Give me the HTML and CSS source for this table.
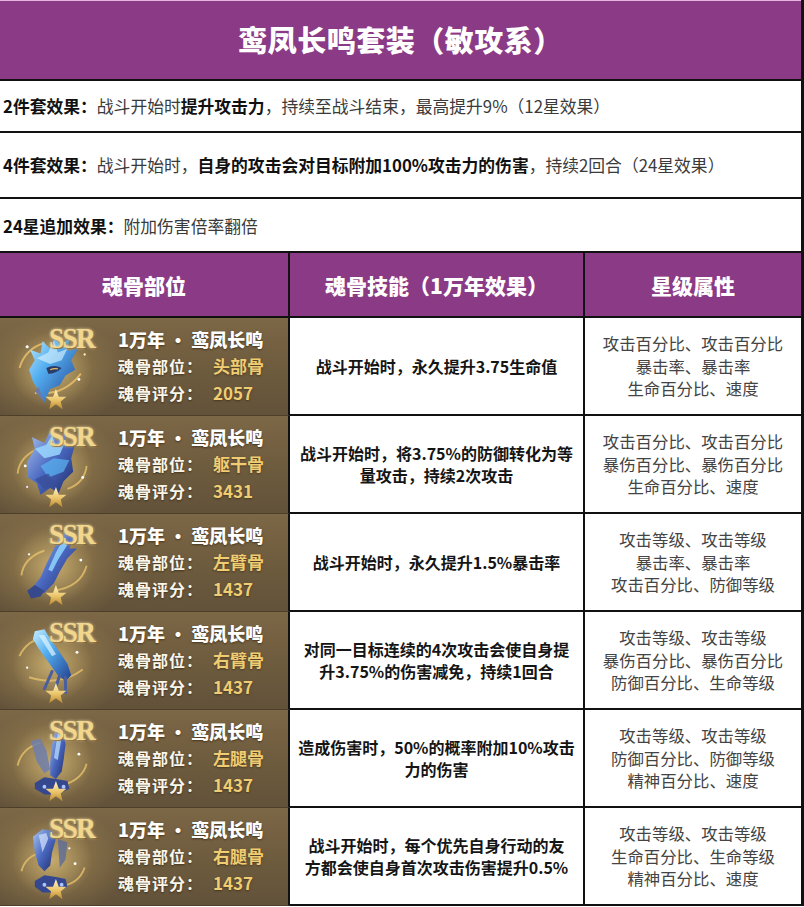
FILE: index.html
```html
<!DOCTYPE html>
<html lang="zh">
<head>
<meta charset="utf-8">
<title>鸾凤长鸣套装（敏攻系）</title>
<link rel="stylesheet" href="styles.css">
</head>
<body>
<svg class="defs" aria-hidden="true">
  <defs>
    <linearGradient id="gBlue" x1="0" y1="0" x2="1" y2="1">
      <stop offset="0" stop-color="#c8eeff"/>
      <stop offset="0.4" stop-color="#53aef0"/>
      <stop offset="1" stop-color="#223e8e"/>
    </linearGradient>
    <linearGradient id="gDeep" x1="0" y1="0" x2="1" y2="1">
      <stop offset="0" stop-color="#a9c6f0"/>
      <stop offset="0.5" stop-color="#4a68c0"/>
      <stop offset="1" stop-color="#1d2a66"/>
    </linearGradient>
    <linearGradient id="gGold" x1="0" y1="0" x2="0" y2="1">
      <stop offset="0" stop-color="#fff4c6"/>
      <stop offset="0.55" stop-color="#ebc469"/>
      <stop offset="1" stop-color="#b98a34"/>
    </linearGradient>
    <radialGradient id="gGlow" cx="0.5" cy="0.5" r="0.5">
      <stop offset="0" stop-color="#f5d78a" stop-opacity="0.5"/>
      <stop offset="1" stop-color="#f5d78a" stop-opacity="0"/>
    </radialGradient>
    <path id="star" d="M52 72 L55 80 L63 80 L57 85 L59 93 L52 88 L45 93 L47 85 L41 80 L49 80Z"/>
  </defs>
</svg>
<div class="page">
  <header class="title">鸾凤长鸣套装（敏攻系）</header>
  <div class="effect e1"><b>2件套效果：</b>战斗开始时<b>提升攻击力</b>，持续至战斗结束，最高提升9%（12星效果）</div>
  <div class="effect e2"><b>4件套效果：</b>战斗开始时，<b>自身的攻击会对目标附加100%攻击力的伤害</b>，持续2回合（24星效果）</div>
  <div class="effect e3"><b>24星追加效果：</b>附加伤害倍率翻倍</div>

  <div class="table">
    <div class="th">魂骨部位</div>
    <div class="th">魂骨技能（1万年效果）</div>
    <div class="th th-last">星级属性</div>

    <!-- row 1 -->
    <div class="bone">
      <div class="art">
        <svg viewBox="0 0 100 96" class="item">
          <ellipse cx="48" cy="52" rx="42" ry="40" fill="url(#gGlow)"/>
          <path d="M14 50 Q20 30 40 24" fill="none" stroke="#e6c06a" stroke-width="2" opacity="0.85"/>
          <path d="M30 76 Q60 80 78 56" fill="none" stroke="#e6c06a" stroke-width="2" opacity="0.85"/>
          <path d="M24 52 L30 42 L25 31 L36 35 L38 22 L46 30 L52 15 L56 28 L66 19 L64 32 L75 30 L68 42 L72 52 L62 58 L56 68 L46 72 L40 86 L34 74 L28 64 Z" fill="url(#gBlue)"/>
          <path d="M32 40 L44 34 L50 22 L54 34 L64 30 L58 42 L46 46 Z" fill="#e1f6ff" opacity="0.6"/>
          <path d="M42 50 Q50 46 58 50 Q52 56 44 56Z" fill="#2b3c68"/>
          <path d="M46 52 Q50 50 54 51" stroke="#e6c06a" stroke-width="1.2" fill="none"/>
          <path d="M34 70 L40 86 L30 74Z" fill="#6c7aa4"/>
          <circle cx="22" cy="28" r="1.6" fill="#fff"/>
          <circle cx="76" cy="62" r="1.5" fill="#fff"/>
          <circle cx="82" cy="36" r="1.2" fill="#fff3c0"/>
          <use href="#star" fill="url(#gGold)"/>
        </svg>
        <span class="ssr">SSR</span>
      </div>
      <div class="info">
        <div class="name">1万年 · 鸾凤长鸣</div>
        <div class="kv"><span class="k">魂骨部位：</span><span class="v">头部骨</span></div>
        <div class="kv"><span class="k">魂骨评分：</span><span class="v">2057</span></div>
      </div>
    </div>
    <div class="skill">战斗开始时，永久提升3.75生命值</div>
    <div class="attr">攻击百分比、攻击百分比<br>暴击率、暴击率<br>生命百分比、速度</div>

    <!-- row 2 -->
    <div class="bone">
      <div class="art">
        <svg viewBox="0 0 100 96" class="item">
          <ellipse cx="48" cy="52" rx="42" ry="40" fill="url(#gGlow)"/>
          <path d="M12 58 Q14 40 34 32" fill="none" stroke="#e6c06a" stroke-width="2" opacity="0.8"/>
          <path d="M64 74 Q82 68 84 50" fill="none" stroke="#e6c06a" stroke-width="2" opacity="0.8"/>
          <path d="M22 46 L30 32 L27 20 L40 26 L46 13 L52 24 L62 17 L62 30 L72 27 L68 42 L70 56 L60 66 L55 78 L46 73 L36 80 L32 68 L23 62 Z" fill="url(#gDeep)"/>
          <path d="M30 32 L42 28 L48 18 L52 30 L62 24 L56 38 L40 42 Z" fill="#9ad7ff" opacity="0.85"/>
          <path d="M36 50 L50 42 L66 44 L60 56 L44 62 Z" fill="#5bb6f4" opacity="0.7"/>
          <path d="M30 64 L44 58 L52 70 L40 74Z" fill="#3a4f9a" opacity="0.8"/>
          <circle cx="20" cy="50" r="1.5" fill="#fff"/>
          <circle cx="80" cy="62" r="1.5" fill="#fff"/>
          <circle cx="22" cy="72" r="1.2" fill="#f3d9ff"/>
          <use href="#star" fill="url(#gGold)"/>
        </svg>
        <span class="ssr">SSR</span>
      </div>
      <div class="info">
        <div class="name">1万年 · 鸾凤长鸣</div>
        <div class="kv"><span class="k">魂骨部位：</span><span class="v">躯干骨</span></div>
        <div class="kv"><span class="k">魂骨评分：</span><span class="v">3431</span></div>
      </div>
    </div>
    <div class="skill">战斗开始时，将3.75%的防御转化为等<br>量攻击，持续2次攻击</div>
    <div class="attr">攻击百分比、攻击百分比<br>暴伤百分比、暴伤百分比<br>生命百分比、速度</div>

    <!-- row 3 -->
    <div class="bone">
      <div class="art">
        <svg viewBox="0 0 100 96" class="item">
          <ellipse cx="50" cy="52" rx="42" ry="40" fill="url(#gGlow)"/>
          <path d="M16 62 Q18 44 40 36" fill="none" stroke="#e6c06a" stroke-width="2" opacity="0.8"/>
          <path d="M50 78 Q78 74 84 52" fill="none" stroke="#e6c06a" stroke-width="2" opacity="0.8"/>
          <path d="M64 16 L70 24 L66 34 L74 34 L64 44 L56 58 L50 70 L40 80 L30 82 L28 74 L36 64 L42 50 L50 34 L56 22 Z" fill="url(#gDeep)"/>
          <path d="M60 24 L64 30 L54 46 L48 58 L44 56 L52 38 Z" fill="#8fd6ff" opacity="0.85"/>
          <path d="M30 72 L22 78 L26 86 L36 84 L40 78Z" fill="#35498c"/>
          <circle cx="78" cy="46" r="1.5" fill="#fff"/>
          <circle cx="24" cy="40" r="1.2" fill="#fff"/>
          <use href="#star" fill="url(#gGold)"/>
        </svg>
        <span class="ssr">SSR</span>
      </div>
      <div class="info">
        <div class="name">1万年 · 鸾凤长鸣</div>
        <div class="kv"><span class="k">魂骨部位：</span><span class="v">左臂骨</span></div>
        <div class="kv"><span class="k">魂骨评分：</span><span class="v">1437</span></div>
      </div>
    </div>
    <div class="skill">战斗开始时，永久提升1.5%暴击率</div>
    <div class="attr">攻击等级、攻击等级<br>暴击率、暴击率<br>攻击百分比、防御等级</div>

    <!-- row 4 -->
    <div class="bone">
      <div class="art">
        <svg viewBox="0 0 100 96" class="item">
          <ellipse cx="48" cy="52" rx="42" ry="40" fill="url(#gGlow)"/>
          <path d="M14 44 Q22 26 44 24" fill="none" stroke="#e6c06a" stroke-width="2" opacity="0.8"/>
          <path d="M24 66 Q56 76 80 58" fill="none" stroke="#e6c06a" stroke-width="2" opacity="0.8"/>
          <path d="M30 18 L40 16 L46 26 L56 40 L64 52 L68 64 L62 70 L54 64 L44 50 L34 36 L28 26 Z" fill="url(#gBlue)"/>
          <path d="M34 22 L40 22 L52 42 L48 44 Z" fill="#dff5ff" opacity="0.7"/>
          <path d="M48 60 L40 78 M56 64 L50 82 M62 66 L62 82" stroke="#4b5f9e" stroke-width="3.2" stroke-linecap="round"/>
          <circle cx="74" cy="40" r="1.5" fill="#fff"/>
          <circle cx="22" cy="56" r="1.2" fill="#fff"/>
          <use href="#star" fill="url(#gGold)"/>
        </svg>
        <span class="ssr">SSR</span>
      </div>
      <div class="info">
        <div class="name">1万年 · 鸾凤长鸣</div>
        <div class="kv"><span class="k">魂骨部位：</span><span class="v">右臂骨</span></div>
        <div class="kv"><span class="k">魂骨评分：</span><span class="v">1437</span></div>
      </div>
    </div>
    <div class="skill">对同一目标连续的4次攻击会使自身提<br>升3.75%的伤害减免，持续1回合</div>
    <div class="attr">攻击等级、攻击等级<br>暴伤百分比、暴伤百分比<br>防御百分比、生命等级</div>

    <!-- row 5 -->
    <div class="bone">
      <div class="art">
        <svg viewBox="0 0 100 96" class="item">
          <ellipse cx="48" cy="52" rx="42" ry="40" fill="url(#gGlow)"/>
          <path d="M12 56 Q16 38 36 32" fill="none" stroke="#e6c06a" stroke-width="2" opacity="0.8"/>
          <path d="M60 76 Q80 70 84 54" fill="none" stroke="#e6c06a" stroke-width="2" opacity="0.8"/>
          <path d="M52 16 L60 20 L62 34 L60 50 L58 62 L52 70 L46 66 L46 52 L48 34 Z" fill="url(#gDeep)"/>
          <path d="M26 30 L36 28 L42 40 L46 60 L40 64 L32 52 Z" fill="#6f7eaa" opacity="0.85"/>
          <path d="M54 22 L58 26 L54 50 L50 48 Z" fill="#bfe4ff" opacity="0.7"/>
          <path d="M30 74 L40 68 L52 70 L64 72 L66 80 L54 86 L40 86 L30 80Z" fill="#34478f"/>
          <circle cx="40" cy="78" r="2" fill="#a9c4ff"/>
          <circle cx="60" cy="78" r="2" fill="#a9c4ff"/>
          <circle cx="76" cy="44" r="1.5" fill="#fff"/>
          <use href="#star" fill="url(#gGold)"/>
        </svg>
        <span class="ssr">SSR</span>
      </div>
      <div class="info">
        <div class="name">1万年 · 鸾凤长鸣</div>
        <div class="kv"><span class="k">魂骨部位：</span><span class="v">左腿骨</span></div>
        <div class="kv"><span class="k">魂骨评分：</span><span class="v">1437</span></div>
      </div>
    </div>
    <div class="skill">造成伤害时，50%的概率附加10%攻击<br>力的伤害</div>
    <div class="attr">攻击等级、攻击等级<br>防御百分比、防御等级<br>精神百分比、速度</div>

    <!-- row 6 -->
    <div class="bone">
      <div class="art">
        <svg viewBox="0 0 100 96" class="item">
          <ellipse cx="48" cy="52" rx="42" ry="40" fill="url(#gGlow)"/>
          <path d="M16 64 Q20 48 38 44" fill="none" stroke="#e6c06a" stroke-width="2" opacity="0.8"/>
          <path d="M54 80 Q76 78 82 60" fill="none" stroke="#e6c06a" stroke-width="2" opacity="0.8"/>
          <path d="M28 28 L38 20 L48 22 L52 30 L48 44 L46 58 L40 64 L34 58 L30 44 Z" fill="url(#gDeep)"/>
          <path d="M34 26 L42 24 L44 30 L38 44 Z" fill="#d4e4ff" opacity="0.7"/>
          <path d="M54 30 L64 34 L62 52 L56 60 Z" fill="#5d6b98" opacity="0.8"/>
          <path d="M30 74 L40 68 L52 70 L62 72 L64 80 L52 86 L38 86 L30 80Z" fill="#34478f"/>
          <circle cx="40" cy="78" r="2" fill="#a9c4ff"/>
          <circle cx="58" cy="78" r="2" fill="#a9c4ff"/>
          <circle cx="72" cy="56" r="1.5" fill="#fff"/>
          <circle cx="66" cy="40" r="1.2" fill="#fff"/>
          <use href="#star" fill="url(#gGold)"/>
        </svg>
        <span class="ssr">SSR</span>
      </div>
      <div class="info">
        <div class="name">1万年 · 鸾凤长鸣</div>
        <div class="kv"><span class="k">魂骨部位：</span><span class="v">右腿骨</span></div>
        <div class="kv"><span class="k">魂骨评分：</span><span class="v">1437</span></div>
      </div>
    </div>
    <div class="skill">战斗开始时，每个优先自身行动的友<br>方都会使自身首次攻击伤害提升0.5%</div>
    <div class="attr">攻击等级、攻击等级<br>生命百分比、生命等级<br>精神百分比、速度</div>
  </div>
</div>
</body>
</html>
```
FILE: styles.css
```css
* { box-sizing: border-box; }
html, body { margin: 0; padding: 0; background: #fff; }
body {
  font-family: "Noto Sans CJK SC", "Noto Sans", sans-serif;
  color: #222;
}
.defs { position: absolute; width: 0; height: 0; overflow: hidden; }

.page {
  width: 804px;
  border-right: 3px solid #111;
}

.title {
  height: 81px;
  background: #8b3a86;
  border-top: 1px solid #e7b6de;
  border-bottom: 2px solid #111;
  color: #fff;
  font-size: 29px;
  font-weight: 900;
  display: flex;
  align-items: center;
  justify-content: center;
  padding-bottom: 2px;
  letter-spacing: 0.5px;
}

.effect {
  display: flex;
  align-items: center;
  padding-left: 3px;
  border-bottom: 2px solid #111;
  font-size: 16.8px;
  color: #3a3a3a;
  white-space: nowrap;
}
.effect b { color: #111; font-weight: 700; }
.e1 { height: 52px; }
.e2 { height: 66px; }
.e3 { height: 54px; padding-top: 2px; }

.table {
  display: grid;
  grid-template-columns: 290px 295px 1fr;
  grid-template-rows: 65px repeat(6, 98px);
}

.th {
  background: #8b3a86;
  color: #fff;
  font-size: 21px;
  font-weight: 900;
  display: flex;
  align-items: center;
  justify-content: center;
  border-right: 2px solid #111;
  border-bottom: 2px solid #111;
}
.th-last { border-right: none; }

.bone {
  position: relative;
  display: flex;
  border-right: 2px solid #111;
  border-bottom: 1px solid #4e3f2a;
  background:
    radial-gradient(ellipse 75px 55px at 52px 55px, rgba(225, 190, 110, 0.35), rgba(225, 190, 110, 0) 100%),
    linear-gradient(180deg, #7c6746 0%, #6c5a3d 60%, #62523a 100%);
}

.art {
  position: relative;
  width: 118px;
  flex: none;
}
.item {
  position: absolute;
  left: 6px;
  top: 2px;
  width: 96px;
  height: 92px;
}
.ssr {
  position: absolute;
  left: 49px;
  top: 3px;
  font-family: "Liberation Serif", "DejaVu Serif", serif;
  font-weight: 700;
  font-size: 30px;
  letter-spacing: -2px;
  color: #f2d68c;
  transform: scaleX(0.92);
  transform-origin: left top;
  text-shadow: 0 0 3px rgba(255, 240, 190, 0.9), 1px 1px 1px #6b4c1c;
}

.info {
  padding-top: 10px;
  display: flex;
  flex-direction: column;
  gap: 5px;
}
.name {
  color: #fff;
  font-size: 18px;
  font-weight: 900;
  line-height: 22px;
  text-shadow: 0 1px 2px rgba(40, 25, 5, 0.6);
  white-space: nowrap;
}
.kv {
  display: flex;
  line-height: 22px;
  font-size: 16px;
  white-space: nowrap;
}
.k {
  width: 95px;
  color: #fbf6ea;
  font-weight: 700;
  letter-spacing: 1px;
  text-shadow: 0 1px 2px rgba(40, 25, 5, 0.6);
}
.v {
  color: #f0cd72;
  font-size: 17px;
  font-weight: 700;
  text-shadow: 0 1px 2px rgba(40, 25, 5, 0.5);
}

.skill {
  display: flex;
  align-items: center;
  justify-content: center;
  text-align: center;
  padding: 0 4px;
  font-size: 16px;
  font-weight: 700;
  line-height: 22px;
  color: #151515;
  white-space: nowrap;
  border-right: 2px solid #111;
  border-bottom: 2px solid #111;
}
.attr {
  display: flex;
  align-items: center;
  justify-content: center;
  text-align: center;
  font-size: 16.4px;
  line-height: 22.5px;
  color: #444;
  border-bottom: 2px solid #111;
}
```
